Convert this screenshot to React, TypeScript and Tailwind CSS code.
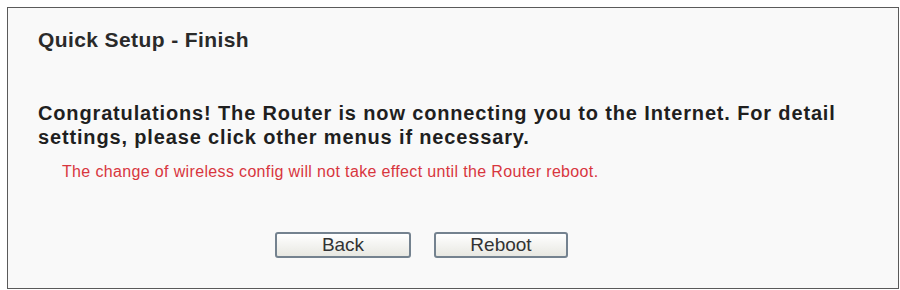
export default function App() {
  return (
    <div className="w-[900px] h-[290px] bg-white pt-[7px] pl-[7px] font-['Liberation_Sans',Arial,sans-serif]">
      <div className="w-[892px] h-[282px] border border-[#5a5a5a] bg-[#f9f9f9] pl-[30px] pt-[20px]">
        <h1 className="text-[21px] leading-[24px] font-bold tracking-[0.4px] text-[#2a2a2a]">Quick Setup - Finish</h1>
        <p className="mt-[49px] text-[20px] leading-[24px] font-bold tracking-[0.85px] text-[#1f1f1f] pr-[40px]">
          Congratulations! The Router is now connecting you to the Internet. For detail settings, please click other
          menus if necessary.
        </p>
        <p className="mt-[13px] ml-[24px] text-[16px] leading-[20px] tracking-[0.35px] text-[#d8363e]">
          The change of wireless config will not take effect until the Router reboot.
        </p>
        <div className="mt-[50px] flex gap-[23px] pl-[237px]">
          <button className="w-[136px] h-[26px] rounded-[3px] border-2 border-[#74828f] bg-gradient-to-b from-white to-[#e8e8e2] text-[19px] leading-[22px] text-[#333]">
            Back
          </button>
          <button className="w-[134px] h-[26px] rounded-[3px] border-2 border-[#74828f] bg-gradient-to-b from-white to-[#e8e8e2] text-[19px] leading-[22px] text-[#333]">
            Reboot
          </button>
        </div>
      </div>
    </div>
  )
}
